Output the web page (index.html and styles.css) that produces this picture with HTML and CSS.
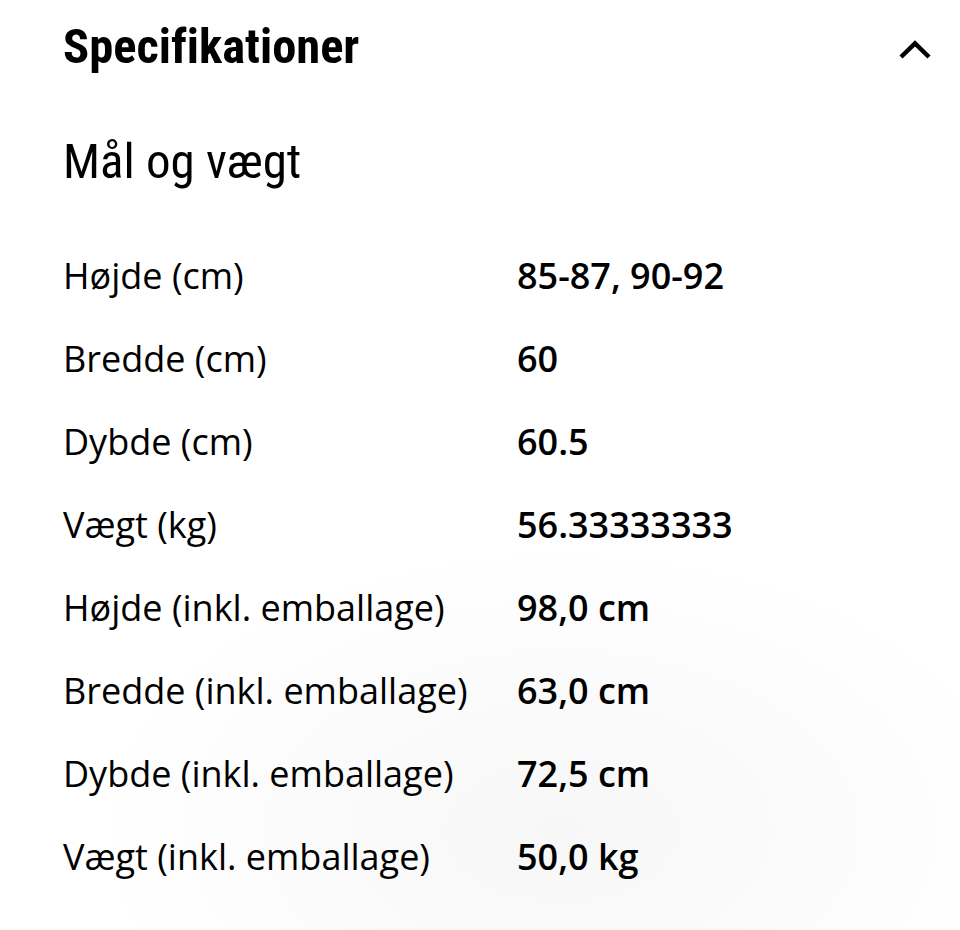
FILE: index.html
```html
<!DOCTYPE html>
<html lang="da">
<head>
<meta charset="utf-8">
<title>Specifikationer</title>
<link rel="stylesheet" href="styles.css">
</head>
<body>
<section class="specs">
  <header class="specs-header">
    <h2 class="specs-title">Specifikationer</h2>
    <svg class="chevron" width="34" height="20" viewBox="0 0 34 20" aria-hidden="true">
      <path d="M3 17 L17 3.5 L31 17" fill="none" stroke="#000" stroke-width="4.5" stroke-linejoin="miter"/>
    </svg>
  </header>
  <h3 class="specs-subtitle">Mål og vægt</h3>
  <dl class="spec-list">
    <dt>Højde (cm)</dt><dd>85-87, 90-92</dd>
    <dt>Bredde (cm)</dt><dd>60</dd>
    <dt>Dybde (cm)</dt><dd>60.5</dd>
    <dt>Vægt (kg)</dt><dd>56.33333333</dd>
    <dt>Højde (inkl. emballage)</dt><dd>98,0 cm</dd>
    <dt>Bredde (inkl. emballage)</dt><dd>63,0 cm</dd>
    <dt>Dybde (inkl. emballage)</dt><dd>72,5 cm</dd>
    <dt>Vægt (inkl. emballage)</dt><dd>50,0 kg</dd>
  </dl>
</section>
</body>
</html>
```
FILE: styles.css
```css
html, body {
  margin: 0;
  padding: 0;
}
body {
  width: 960px;
  height: 930px;
  overflow: hidden;
  background: radial-gradient(ellipse 460px 280px at 560px 830px, #f7f7f7 0%, #fbfbfb 55%, #ffffff 100%);
  color: #000;
  font-family: "Open Sans", "Noto Sans", sans-serif;
}
.specs {
  padding: 24px 28px 0 63px;
}
.specs-header {
  display: flex;
  justify-content: space-between;
  align-items: center;
}
.specs-title {
  margin: 0;
  font-family: "Roboto", "Liberation Sans Narrow", sans-serif;
  font-weight: 700;
  font-stretch: 75%;
  font-size: 48.5px;
  line-height: 46px;
  font-variant-ligatures: none;
}
.chevron {
  display: block;
  margin-top: 6px;
}
.specs-subtitle {
  margin: 68px 0 0;
  font-family: "Roboto", "Liberation Sans Narrow", sans-serif;
  font-weight: 400;
  font-stretch: 75%;
  font-size: 49px;
  line-height: 48px;
}
.spec-list {
  margin: 48px 0 0;
  display: grid;
  grid-template-columns: 454px 1fr;
  grid-auto-rows: 83px;
  font-size: 36px;
  line-height: 83px;
}
.spec-list dt {
  font-weight: 400;
}
.spec-list dd {
  margin: 0;
  font-weight: 600;
}
```
